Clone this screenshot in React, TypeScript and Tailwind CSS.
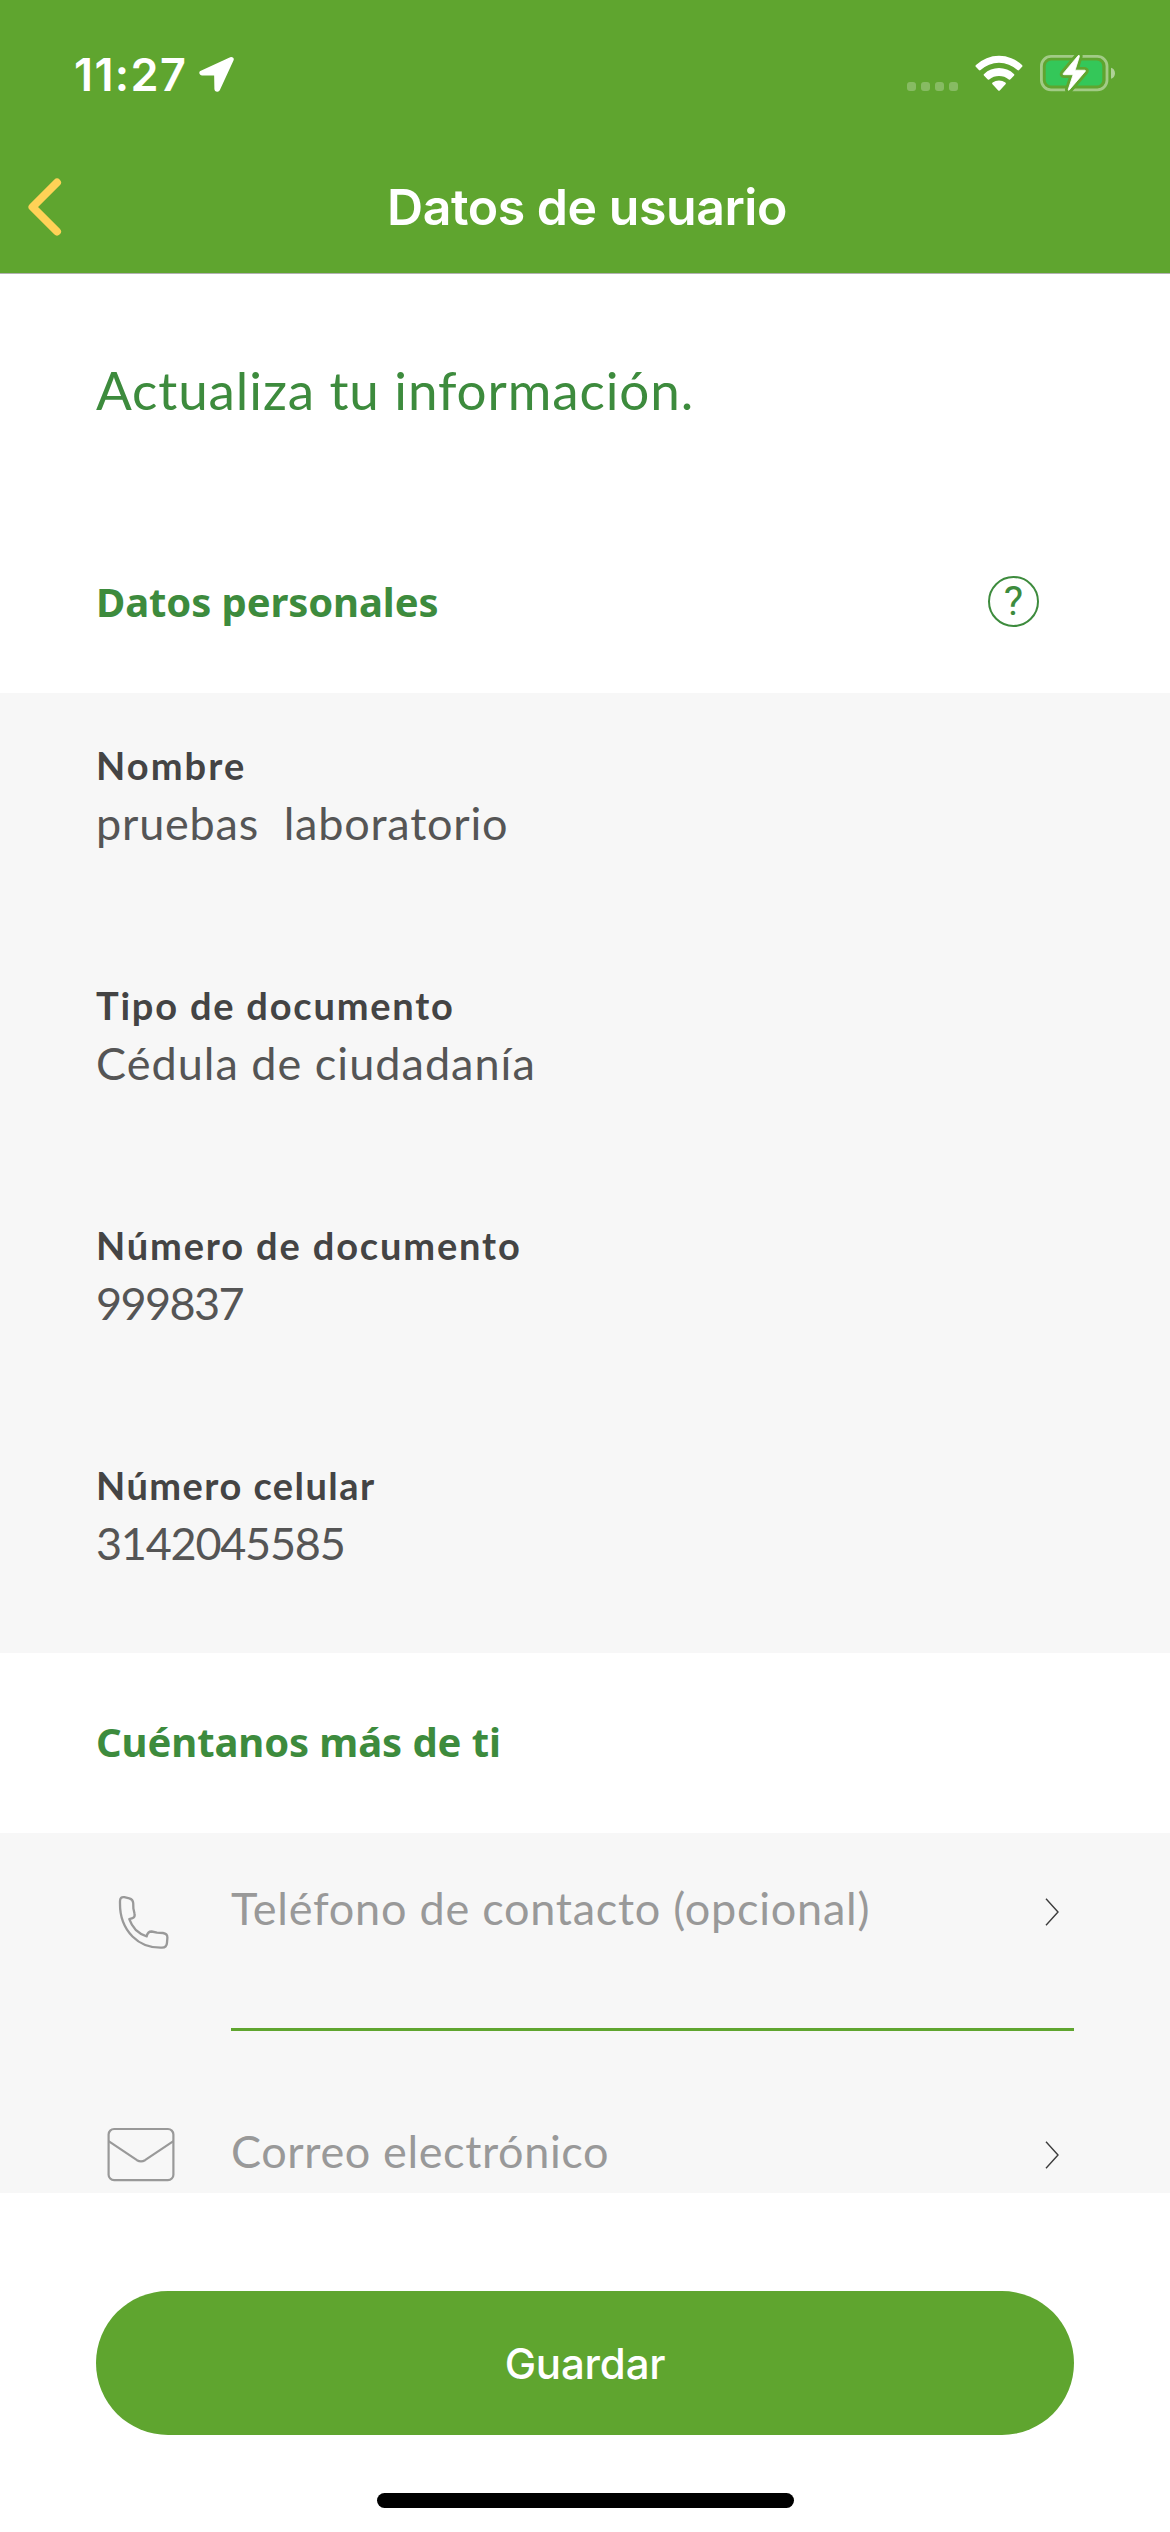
import type { ReactNode } from "react";

const personalData = [
  { label: "Nombre", value: "pruebas  laboratorio", labelSpacing: "tracking-[2.09px]", valueSpacing: "tracking-[0.79px]" },
  { label: "Tipo de documento", value: "Cédula de ciudadanía", labelSpacing: "tracking-[1.79px]", valueSpacing: "tracking-[1.02px]" },
  { label: "Número de documento", value: "999837", labelSpacing: "tracking-[1.85px]", valueSpacing: "tracking-[-1.6px]" },
  { label: "Número celular", value: "3142045585", labelSpacing: "tracking-[1.46px]", valueSpacing: "tracking-[-1.25px]" },
];

function LocationIcon() {
  return (
    <svg className="ml-[11px] mt-[8px] h-[38px] w-[38px]" viewBox="0 0 38 38" fill="#fff" stroke="#fff" strokeWidth="5" strokeLinejoin="round">
      <path d="M33.2 4.4 3.9 17.9H18.6L18.900 34.300 19.500 34.300z" />
    </svg>
  );
}

function WifiIcon() {
  return (
    <svg className="h-[36px] w-[48px]" viewBox="0 0 48 36" fill="#fff">
      <path d="M1 10A33.5 33.5 0 0 1 47 10q.9.8.1 1.7L44.1 15q-.8.8-1.7.1A27 27 0 0 0 5.6 15.1q-.9.7-1.7-.1L.8 11.7q-.8-.9.2-1.7z" />
      <path d="M9.1 18.9A21.8 21.8 0 0 1 38.9 18.9q1 .9.2 1.7l-3.6 3.7q-.8.8-1.7.1a15.6 15.6 0 0 0-19.6 0q-.9.7-1.7-.1l-3.6-3.7q-.8-.8.2-1.7z" />
      <path d="M17.6 27.6a10.8 10.8 0 0 1 12.8 0q.9.8.1 1.6l-5.5 6.1q-1 1-2 0l-5.5-6.1q-.8-.8.1-1.6z" />
    </svg>
  );
}

function BatteryIcon() {
  const bolt = "M38.2 1.6 23.3 19.4q-.8 1.3.6 1.3h9.2l-4.8 14.6q-.2 1.6 1 .6L45.2 17.4q.7-1.1-.6-1.2h-9.5l4.3-13.8q.1-1.6-1.2-.8z";
  return (
    <svg className="h-[38px] w-[76px]" viewBox="0 0 76 38">
      <rect x="1.4" y="2.4" width="65.6" height="33.4" rx="9.6" fill="none" stroke="#fff" strokeOpacity=".42" strokeWidth="2.8" />
      <path d="M71 13.7c2.6.8 4 3 4 5.5s-1.4 4.7-4 5.5z" fill="#fff" fillOpacity=".5" />
      <rect x="5.7" y="6.6" width="56.6" height="25" rx="5.5" fill="#34c759" />
      <path d={bolt} fill="#5fa52f" stroke="#5fa52f" strokeWidth="6.5" strokeLinejoin="round" />
      <path d={bolt} fill="#fff" stroke="#fff" strokeWidth="0.8" strokeLinejoin="round" />
    </svg>
  );
}

function ChevronRight() {
  return (
    <svg className="h-[28px] w-[15px]" viewBox="0 0 15 28" fill="none" stroke="#3c3c3c" strokeWidth="1.4">
      <path d="M1 .8 13 14 1 27.2" />
    </svg>
  );
}

function PhoneIcon() {
  return (
    <svg className="ml-[22px] mt-[62px] h-[55px] w-[52px]" viewBox="0 0 52 55" fill="none" stroke="#999" strokeWidth="2.3" strokeLinejoin="round">
      <path d="M6.3 2.2 11.3 3.4Q15 4.5 15.2 8L15.4 13.6 16.5 18.6Q17.400 22 14.500 23.200L11.300 24.200Q13.200 30 18 35.200Q22.800 39.800 28.700 41.400Q29.600 36.400 33.700 36.500L39 37.600 45 38Q49.400 38.600 49.400 42.600L49 47.600Q48.800 52.600 44 52.700Q26 53.200 14.500 41.500Q1.800 28.500 2 8.500L2 6.200Q2 1.500 6.300 2.200Z" />
    </svg>
  );
}

function MailIcon() {
  return (
    <svg className="ml-[11px] mt-[96px] h-[55px] w-[68px]" viewBox="0 0 68 55" fill="none" stroke="#999" strokeWidth="2.2">
      <rect x="1.6" y="2" width="64.8" height="51.2" rx="5.5" />
      <path d="M1.6 14.2 30 33.2Q34 35.7 38 33.2L66.4 14.2" />
    </svg>
  );
}

function SectionTitle({ children }: { children: ReactNode }) {
  return (
    <h2 className="font-['Noto_Sans',sans-serif] text-[40px] leading-[55px] font-bold tracking-[-0.1px] text-[#3d8b3d]">
      {children}
    </h2>
  );
}

export default function App() {
  return (
    <div className="flex h-[2532px] w-[1170px] flex-col overflow-hidden bg-white font-[Lato,sans-serif]">
      <header className="flex h-[274px] shrink-0 flex-col border-b border-[#b2b2b2] bg-[#5fa52f] font-[Inter,sans-serif] text-white">
        <div className="flex h-[141px] items-start justify-between pt-[47px] pr-[54px] pl-[74px]">
          <div className="flex">
            <span className="text-[45px] leading-[55px] font-semibold tracking-[1.4px]">11:27</span>
            <LocationIcon />
          </div>
          <div className="flex pt-[8px]">
            <div className="mt-[27px] mr-[17px] flex gap-[5px]">
              {[0, 1, 2, 3].map((dot) => (
                <span key={dot} className="size-[9px] rounded-[3px] bg-white/25" />
              ))}
            </div>
            <WifiIcon />
            <div className="-mt-px ml-[17px]">
              <BatteryIcon />
            </div>
          </div>
        </div>
        <div className="grid h-[132px] grid-cols-[100px_1fr_100px] items-center">
          <svg className="ml-[28px] h-[58px] w-[34px]" viewBox="0 0 34 58" fill="none" stroke="#ffd257" strokeWidth="8" strokeLinecap="round" strokeLinejoin="round">
            <path d="M29 4.5 4.5 29 29 53.5" />
          </svg>
          <h1 className="pl-[4px] text-center text-[50px] leading-[60px] font-semibold tracking-[-0.45px]">Datos de usuario</h1>
        </div>
      </header>

      <section className="h-[419px] shrink-0 px-[96px] pt-[84px]">
        <p className="text-[53px] leading-[63px] tracking-[0.9px] text-[#3d8b3d]">Actualiza tu información.</p>
        <div className="mt-[153px] flex h-[55px] items-center justify-between pr-[35px]">
          <SectionTitle>Datos personales</SectionTitle>
          <span className="flex size-[51px] items-center justify-center rounded-full border-2 border-[#3d8b3d] font-[Roboto,sans-serif] text-[41px] leading-[47px] text-[#3d8b3d]">
            ?
          </span>
        </div>
      </section>

      <dl className="flex h-[960px] shrink-0 flex-col gap-[124px] bg-[#f7f7f7] px-[96px] pt-[44px]">
        {personalData.map((item) => (
          <div key={item.label}>
            <dt className={`text-[38px] leading-[56px] font-bold text-[#444] ${item.labelSpacing}`}>{item.label}</dt>
            <dd className={`text-[45px] leading-[60px] whitespace-pre text-[#555] ${item.valueSpacing}`}>{item.value}</dd>
          </div>
        ))}
      </dl>

      <section className="h-[180px] shrink-0 px-[96px] pt-[61px]">
        <SectionTitle>Cuéntanos más de ti</SectionTitle>
      </section>

      <section className="h-[360px] shrink-0 overflow-hidden bg-[#f7f7f7] px-[96px] text-[45px] leading-[54px] text-[#999]">
        <div className="flex h-[198px]">
          <div className="w-[135px] shrink-0">
            <PhoneIcon />
          </div>
          <div className="flex flex-1 items-start justify-between border-b-3 border-[#5fa52f] pt-[48px] pr-[14px]">
            <span className="tracking-[0.75px]">Teléfono de contacto (opcional)</span>
            <div className="pt-[17px]">
              <ChevronRight />
            </div>
          </div>
        </div>
        <div className="flex h-[198px]">
          <div className="w-[135px] shrink-0">
            <MailIcon />
          </div>
          <div className="flex flex-1 items-start justify-between pt-[93px] pr-[14px]">
            <span className="tracking-[0.62px]">Correo electrónico</span>
            <div className="pt-[17px]">
              <ChevronRight />
            </div>
          </div>
        </div>
      </section>

      <footer className="flex flex-col items-center px-[96px] pt-[98px]">
        <button className="h-[144px] w-full rounded-full bg-[#5fa52f] font-[Inter,sans-serif] text-[42px] leading-[51px] font-medium tracking-[-0.19px] text-white">
          Guardar
        </button>
        <div className="mt-[58px] h-[15px] w-[417px] rounded-full bg-black" />
      </footer>
    </div>
  );
}
